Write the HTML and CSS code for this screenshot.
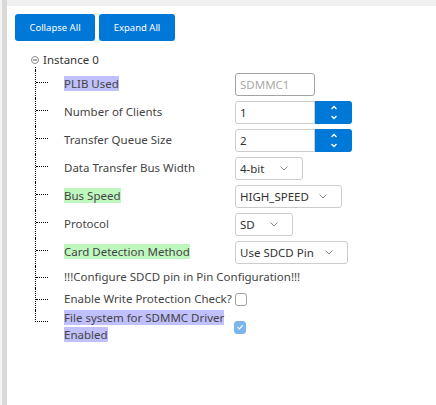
FILE: index.html
```html
<!DOCTYPE html>
<html>
<head>
<meta charset="utf-8">
<link rel="stylesheet" href="styles.css">
</head>
<body>
<div class="frame">
  <div class="edge"></div>
  <main class="content">
    <div class="toolbar">
      <button class="btn btn-collapse">Collapse All</button>
      <button class="btn btn-expand">Expand All</button>
    </div>
    <div class="tree">
      <div class="root">
        <svg class="toggle" width="8" height="8" viewBox="0 0 8 8"><circle cx="4" cy="4" r="3.5" fill="none" stroke="#8a8a8a" stroke-width="1"/><line x1="2" y1="4" x2="6" y2="4" stroke="#555" stroke-width="1"/></svg>
        <span class="root-label">Instance 0</span>
      </div>
      <div class="children">
        <div class="node">
          <span class="branch"></span>
          <span class="label"><span class="hl hl-purple">PLIB Used</span></span>
          <div class="ctrl"><div class="field field-disabled">SDMMC1</div></div>
        </div>
        <div class="node">
          <span class="branch"></span>
          <span class="label">Number of Clients</span>
          <div class="ctrl spin">
            <div class="field field-num">1</div>
            <div class="spin-btn"><svg width="8" height="17" viewBox="0 0 8 17"><polyline points="1.5,5 4,2.5 6.5,5" fill="none" stroke="#fff" stroke-width="1.3"/><polyline points="1.5,12 4,14.5 6.5,12" fill="none" stroke="#fff" stroke-width="1.3"/></svg></div>
          </div>
        </div>
        <div class="node">
          <span class="branch"></span>
          <span class="label">Transfer Queue Size</span>
          <div class="ctrl spin">
            <div class="field field-num">2</div>
            <div class="spin-btn"><svg width="8" height="17" viewBox="0 0 8 17"><polyline points="1.5,5 4,2.5 6.5,5" fill="none" stroke="#fff" stroke-width="1.3"/><polyline points="1.5,12 4,14.5 6.5,12" fill="none" stroke="#fff" stroke-width="1.3"/></svg></div>
          </div>
        </div>
        <div class="node">
          <span class="branch"></span>
          <span class="label">Data Transfer Bus Width</span>
          <div class="ctrl"><div class="select sel-width"><span>4-bit</span><svg class="chev" width="8" height="5" viewBox="0 0 8 5"><polyline points="0.5,0.5 4,4 7.5,0.5" fill="none" stroke="#8c8c8c" stroke-width="1"/></svg></div></div>
        </div>
        <div class="node">
          <span class="branch"></span>
          <span class="label"><span class="hl hl-green">Bus Speed</span></span>
          <div class="ctrl"><div class="select sel-speed"><span>HIGH_SPEED</span><svg class="chev" width="8" height="5" viewBox="0 0 8 5"><polyline points="0.5,0.5 4,4 7.5,0.5" fill="none" stroke="#8c8c8c" stroke-width="1"/></svg></div></div>
        </div>
        <div class="node">
          <span class="branch"></span>
          <span class="label">Protocol</span>
          <div class="ctrl"><div class="select sel-proto"><span>SD</span><svg class="chev" width="8" height="5" viewBox="0 0 8 5"><polyline points="0.5,0.5 4,4 7.5,0.5" fill="none" stroke="#8c8c8c" stroke-width="1"/></svg></div></div>
        </div>
        <div class="node">
          <span class="branch"></span>
          <span class="label"><span class="hl hl-green">Card Detection Method</span></span>
          <div class="ctrl"><div class="select sel-card"><span>Use SDCD Pin</span><svg class="chev" width="8" height="5" viewBox="0 0 8 5"><polyline points="0.5,0.5 4,4 7.5,0.5" fill="none" stroke="#8c8c8c" stroke-width="1"/></svg></div></div>
        </div>
        <div class="node node-text">
          <span class="branch"></span>
          <span class="label label-wide">!!!Configure SDCD pin in Pin Configuration!!!</span>
        </div>
        <div class="node node-text">
          <span class="branch"></span>
          <span class="label">Enable Write Protection Check?</span>
          <div class="ctrl"><span class="check"></span></div>
        </div>
        <div class="node node-multi">
          <span class="branch"></span>
          <span class="label label-multi"><span class="hl hl-purple">File system for SDMMC Driver Enabled</span></span>
          <div class="ctrl ctrl-check"><span class="check check-on"><svg width="12" height="12" viewBox="0 0 12 12"><polyline points="3,6.2 5.2,8.3 9.2,4" fill="none" stroke="#fff" stroke-width="1.4"/></svg></span></div>
        </div>
      </div>
    </div>
  </main>
</div>
</body>
</html>
```
FILE: styles.css
```css
* { box-sizing: border-box; }
html, body { margin: 0; padding: 0; height: 100%; background: #fff; }
body { font-family: "Noto Sans", "Open Sans", sans-serif; color: #444; }

.frame { display: flex; height: 405px; }
.edge { width: 7px; flex: none; background: #d9d9d9; border-left: 2px solid #f3f3f3; }
.content { flex: 1; border-top: 6px solid #f0f0f0; padding: 8px 0 0 8px; }

.toolbar { display: flex; gap: 4px; }
.btn {
  height: 27px; border: none; border-radius: 3px; background: #0078d7; color: #fff;
  font-family: "Noto Sans", sans-serif; font-size: 9.5px; padding: 0; cursor: pointer;
}
.btn-collapse { width: 80px; }
.btn-expand { width: 76px; }

.tree { margin-top: 12px; }
.root { display: flex; align-items: center; height: 14px; padding-left: 16px; gap: 4px; }
.toggle { flex: none; }
.root-label { font-size: 11.5px; color: #333; line-height: 14px; }

.children { margin-left: 20px; }
.children::before { content: ""; display: block; height: 3px; border-left: 1px dotted #000; }

.node {
  display: grid; grid-template-columns: 12px 187px auto; align-items: center;
  min-height: 28px; border-left: 1px dotted #000; font-size: 11.5px;
}
.node-text { min-height: 22px; }
.node-multi { border-left: 1px solid transparent; min-height: 34px; align-items: start; }

.branch { align-self: start; height: 13px; border-bottom: 1px dotted #000; }
.node-text .branch { height: 12px; }
.node-multi .branch { border-left: 1px dotted #000; margin-left: -1px; height: 12px; }

.label { padding-left: 16px; line-height: 16px; white-space: nowrap; }
.label-wide { grid-column: 2 / 4; }
.label-multi { white-space: normal; padding-right: 6px; line-height: 16.5px; }

.hl-purple { background: #c0c0fc; }
.hl-green { background: #bff8bf; }

.ctrl { display: flex; align-items: center; }
.ctrl-check { align-self: center; margin-left: -1px; }

.field {
  height: 23px; width: 80px; border: 1px solid #ccc; border-radius: 3px;
  padding-left: 4px; line-height: 21px; color: #333; font-size: 11.5px;
}
.field-disabled { border-color: #a3a3a3; color: #aaa; }
.field-num { border-radius: 3px 0 0 3px; }
.spin-btn {
  width: 37px; height: 23px; background: #0078d7; border-radius: 0 3px 3px 0;
  display: flex; align-items: center; justify-content: center;
}

.select {
  height: 23px; border: 1px solid #ccc; border-radius: 3px; padding-left: 4px; padding-right: 14px;
  display: flex; align-items: center; justify-content: space-between; color: #333;
}
.sel-width { width: 68px; }
.sel-speed { width: 107px; }
.sel-proto { width: 58px; }
.sel-card { width: 113px; }
.chev { flex: none; }

.check {
  display: inline-block; width: 12px; height: 13px; border: 1px solid #a0a0a0; border-radius: 3px; background: #fff;
}
.check-on { background: #7ab6ec; border-color: #7ab6ec; display: flex; align-items: center; justify-content: center; }
```
